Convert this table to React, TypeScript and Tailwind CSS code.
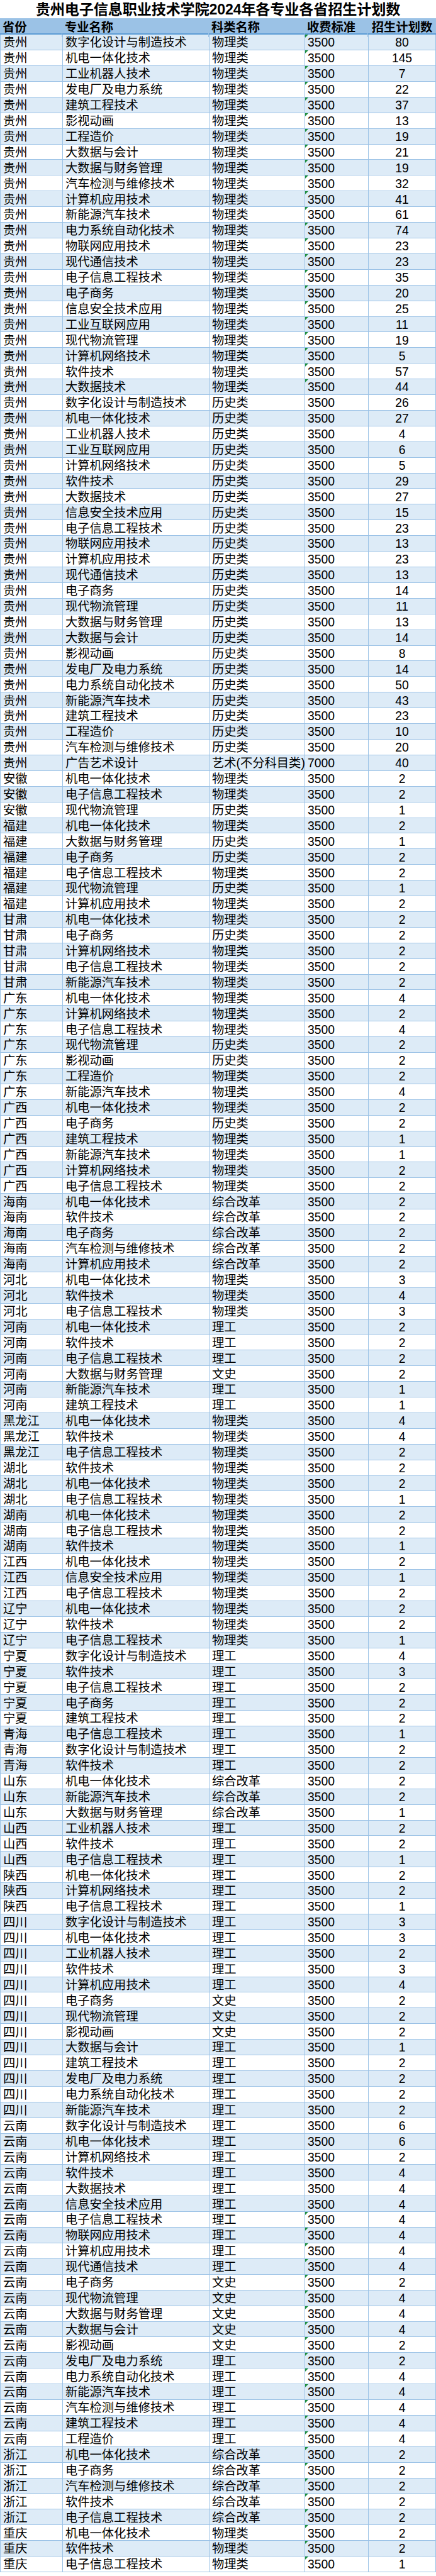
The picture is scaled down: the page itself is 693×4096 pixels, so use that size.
type Row = [string, string, string, number];

const rows: Row[] = [
  ["贵州", "数字化设计与制造技术", "物理类", 80],
  ["贵州", "机电一体化技术", "物理类", 145],
  ["贵州", "工业机器人技术", "物理类", 7],
  ["贵州", "发电厂及电力系统", "物理类", 22],
  ["贵州", "建筑工程技术", "物理类", 37],
  ["贵州", "影视动画", "物理类", 13],
  ["贵州", "工程造价", "物理类", 19],
  ["贵州", "大数据与会计", "物理类", 21],
  ["贵州", "大数据与财务管理", "物理类", 19],
  ["贵州", "汽车检测与维修技术", "物理类", 32],
  ["贵州", "计算机应用技术", "物理类", 41],
  ["贵州", "新能源汽车技术", "物理类", 61],
  ["贵州", "电力系统自动化技术", "物理类", 74],
  ["贵州", "物联网应用技术", "物理类", 23],
  ["贵州", "现代通信技术", "物理类", 23],
  ["贵州", "电子信息工程技术", "物理类", 35],
  ["贵州", "电子商务", "物理类", 20],
  ["贵州", "信息安全技术应用", "物理类", 25],
  ["贵州", "工业互联网应用", "物理类", 11],
  ["贵州", "现代物流管理", "物理类", 19],
  ["贵州", "计算机网络技术", "物理类", 5],
  ["贵州", "软件技术", "物理类", 57],
  ["贵州", "大数据技术", "物理类", 44],
  ["贵州", "数字化设计与制造技术", "历史类", 26],
  ["贵州", "机电一体化技术", "历史类", 27],
  ["贵州", "工业机器人技术", "历史类", 4],
  ["贵州", "工业互联网应用", "历史类", 6],
  ["贵州", "计算机网络技术", "历史类", 5],
  ["贵州", "软件技术", "历史类", 29],
  ["贵州", "大数据技术", "历史类", 27],
  ["贵州", "信息安全技术应用", "历史类", 15],
  ["贵州", "电子信息工程技术", "历史类", 23],
  ["贵州", "物联网应用技术", "历史类", 13],
  ["贵州", "计算机应用技术", "历史类", 23],
  ["贵州", "现代通信技术", "历史类", 13],
  ["贵州", "电子商务", "历史类", 14],
  ["贵州", "现代物流管理", "历史类", 11],
  ["贵州", "大数据与财务管理", "历史类", 13],
  ["贵州", "大数据与会计", "历史类", 14],
  ["贵州", "影视动画", "历史类", 8],
  ["贵州", "发电厂及电力系统", "历史类", 14],
  ["贵州", "电力系统自动化技术", "历史类", 50],
  ["贵州", "新能源汽车技术", "历史类", 43],
  ["贵州", "建筑工程技术", "历史类", 23],
  ["贵州", "工程造价", "历史类", 10],
  ["贵州", "汽车检测与维修技术", "历史类", 20],
  ["贵州", "广告艺术设计", "艺术(不分科目类)", 40],
  ["安徽", "机电一体化技术", "物理类", 2],
  ["安徽", "电子信息工程技术", "物理类", 2],
  ["安徽", "现代物流管理", "历史类", 1],
  ["福建", "机电一体化技术", "物理类", 2],
  ["福建", "大数据与财务管理", "历史类", 1],
  ["福建", "电子商务", "历史类", 2],
  ["福建", "电子信息工程技术", "物理类", 2],
  ["福建", "现代物流管理", "历史类", 1],
  ["福建", "计算机应用技术", "物理类", 2],
  ["甘肃", "机电一体化技术", "物理类", 2],
  ["甘肃", "电子商务", "历史类", 2],
  ["甘肃", "计算机网络技术", "物理类", 2],
  ["甘肃", "电子信息工程技术", "物理类", 2],
  ["甘肃", "新能源汽车技术", "物理类", 2],
  ["广东", "机电一体化技术", "物理类", 4],
  ["广东", "计算机网络技术", "物理类", 2],
  ["广东", "电子信息工程技术", "物理类", 4],
  ["广东", "现代物流管理", "历史类", 2],
  ["广东", "影视动画", "历史类", 2],
  ["广东", "工程造价", "物理类", 2],
  ["广东", "新能源汽车技术", "物理类", 4],
  ["广西", "机电一体化技术", "物理类", 2],
  ["广西", "电子商务", "历史类", 2],
  ["广西", "建筑工程技术", "物理类", 1],
  ["广西", "新能源汽车技术", "物理类", 1],
  ["广西", "计算机网络技术", "物理类", 2],
  ["广西", "电子信息工程技术", "物理类", 2],
  ["海南", "机电一体化技术", "综合改革", 2],
  ["海南", "软件技术", "综合改革", 2],
  ["海南", "电子商务", "综合改革", 2],
  ["海南", "汽车检测与维修技术", "综合改革", 2],
  ["海南", "计算机应用技术", "综合改革", 2],
  ["河北", "机电一体化技术", "物理类", 3],
  ["河北", "软件技术", "物理类", 4],
  ["河北", "电子信息工程技术", "物理类", 3],
  ["河南", "机电一体化技术", "理工", 2],
  ["河南", "软件技术", "理工", 2],
  ["河南", "电子信息工程技术", "理工", 2],
  ["河南", "大数据与财务管理", "文史", 2],
  ["河南", "新能源汽车技术", "理工", 1],
  ["河南", "建筑工程技术", "理工", 1],
  ["黑龙江", "机电一体化技术", "物理类", 4],
  ["黑龙江", "软件技术", "物理类", 4],
  ["黑龙江", "电子信息工程技术", "物理类", 2],
  ["湖北", "软件技术", "物理类", 2],
  ["湖北", "机电一体化技术", "物理类", 2],
  ["湖北", "电子信息工程技术", "物理类", 1],
  ["湖南", "机电一体化技术", "物理类", 2],
  ["湖南", "电子信息工程技术", "物理类", 2],
  ["湖南", "软件技术", "物理类", 1],
  ["江西", "机电一体化技术", "物理类", 2],
  ["江西", "信息安全技术应用", "物理类", 1],
  ["江西", "电子信息工程技术", "物理类", 2],
  ["辽宁", "机电一体化技术", "物理类", 2],
  ["辽宁", "软件技术", "物理类", 2],
  ["辽宁", "电子信息工程技术", "物理类", 1],
  ["宁夏", "数字化设计与制造技术", "理工", 4],
  ["宁夏", "软件技术", "理工", 3],
  ["宁夏", "电子信息工程技术", "理工", 2],
  ["宁夏", "电子商务", "理工", 2],
  ["宁夏", "建筑工程技术", "理工", 2],
  ["青海", "电子信息工程技术", "理工", 1],
  ["青海", "数字化设计与制造技术", "理工", 2],
  ["青海", "软件技术", "理工", 2],
  ["山东", "机电一体化技术", "综合改革", 2],
  ["山东", "新能源汽车技术", "综合改革", 2],
  ["山东", "大数据与财务管理", "综合改革", 1],
  ["山西", "工业机器人技术", "理工", 2],
  ["山西", "软件技术", "理工", 2],
  ["山西", "电子信息工程技术", "理工", 1],
  ["陕西", "机电一体化技术", "理工", 2],
  ["陕西", "计算机网络技术", "理工", 2],
  ["陕西", "电子信息工程技术", "理工", 1],
  ["四川", "数字化设计与制造技术", "理工", 3],
  ["四川", "机电一体化技术", "理工", 3],
  ["四川", "工业机器人技术", "理工", 2],
  ["四川", "软件技术", "理工", 3],
  ["四川", "计算机应用技术", "理工", 4],
  ["四川", "电子商务", "文史", 2],
  ["四川", "现代物流管理", "文史", 2],
  ["四川", "影视动画", "文史", 2],
  ["四川", "大数据与会计", "理工", 1],
  ["四川", "建筑工程技术", "理工", 2],
  ["四川", "发电厂及电力系统", "理工", 2],
  ["四川", "电力系统自动化技术", "理工", 2],
  ["四川", "新能源汽车技术", "理工", 2],
  ["云南", "数字化设计与制造技术", "理工", 6],
  ["云南", "机电一体化技术", "理工", 6],
  ["云南", "计算机网络技术", "理工", 2],
  ["云南", "软件技术", "理工", 4],
  ["云南", "大数据技术", "理工", 4],
  ["云南", "信息安全技术应用", "理工", 4],
  ["云南", "电子信息工程技术", "理工", 4],
  ["云南", "物联网应用技术", "理工", 4],
  ["云南", "计算机应用技术", "理工", 4],
  ["云南", "现代通信技术", "理工", 4],
  ["云南", "电子商务", "文史", 2],
  ["云南", "现代物流管理", "文史", 4],
  ["云南", "大数据与财务管理", "文史", 4],
  ["云南", "大数据与会计", "文史", 4],
  ["云南", "影视动画", "文史", 2],
  ["云南", "发电厂及电力系统", "理工", 2],
  ["云南", "电力系统自动化技术", "理工", 4],
  ["云南", "新能源汽车技术", "理工", 4],
  ["云南", "汽车检测与维修技术", "理工", 4],
  ["云南", "建筑工程技术", "理工", 4],
  ["云南", "工程造价", "理工", 4],
  ["浙江", "机电一体化技术", "综合改革", 2],
  ["浙江", "电子商务", "综合改革", 2],
  ["浙江", "汽车检测与维修技术", "综合改革", 2],
  ["浙江", "软件技术", "综合改革", 2],
  ["浙江", "电子信息工程技术", "综合改革", 2],
  ["重庆", "机电一体化技术", "物理类", 2],
  ["重庆", "软件技术", "物理类", 2],
  ["重庆", "电子信息工程技术", "物理类", 1],
];

// rows whose fee cell carries Excel's "number stored as text" marker
const flagged = (i: number) => i < 23 || i >= 139;

const grid = "grid grid-cols-[99px_233px_152px_101px_1fr]";

export default function App() {
  return (
    <div
      className="w-[693px] bg-white text-black"
      style={{ fontFamily: '"Liberation Sans", "Noto Sans CJK SC", sans-serif' }}
    >
      {/* Title */}
      <div className="h-[28.6px] flex items-end justify-center">
        <h1 className="text-[23.2px] leading-none font-bold tracking-[-0.2px] pb-[1px]">
          贵州电子信息职业技术学院2024年各专业各省招生计划数
        </h1>
      </div>

      {/* Header */}
      <div
        className={`${grid} h-[26.6px] bg-[#9BC2E6] border-t border-[#9BC2E6] border-b-2 border-b-[#5B9BD5] text-[19.3px] font-bold`}
      >
        <div className="pl-[4px] flex items-center border-r border-[#9BC2E6]">省份</div>
        <div className="pl-[4px] flex items-center border-r border-[#9BC2E6]">专业名称</div>
        <div className="pl-[4px] flex items-center border-r border-[#9BC2E6]">科类名称</div>
        <div className="pl-[4px] flex items-center border-r border-[#9BC2E6]">收费标准</div>
        <div className="flex items-center justify-center whitespace-nowrap">招生计划数</div>
      </div>

      {/* Body */}
      {rows.map((r, i) => (
        <div
          key={i}
          className={`${grid} h-[24.92px] border-b border-[#9BC2E6] border-l border-l-[#9BC2E6] border-r border-r-[#9BC2E6] text-[19.3px] leading-none ${
            i % 2 === 0 ? "bg-[#DDEBF7]" : "bg-white"
          }`}
        >
          <div className="pl-[4px] flex items-center pt-[2px] border-r border-[#9BC2E6] whitespace-nowrap">
            {r[0]}
          </div>
          <div className="pl-[4px] flex items-center pt-[2px] border-r border-[#9BC2E6] whitespace-nowrap">
            {r[1]}
          </div>
          <div className="pl-[4px] flex items-center pt-[2px] border-r border-[#9BC2E6] whitespace-nowrap overflow-visible">
            {r[2]}
          </div>
          <div className="relative pl-[4px] flex items-center pt-[2px] border-r border-[#9BC2E6]">
            {flagged(i) && (
              <span className="absolute left-0 top-0 w-0 h-0 border-t-[5px] border-t-[#1E8E3E] border-r-[5px] border-r-transparent" />
            )}
            {i === 46 ? 7000 : 3500}
          </div>
          <div className="flex items-center justify-center pt-[2px]">{r[3]}</div>
        </div>
      ))}
    </div>
  );
}
